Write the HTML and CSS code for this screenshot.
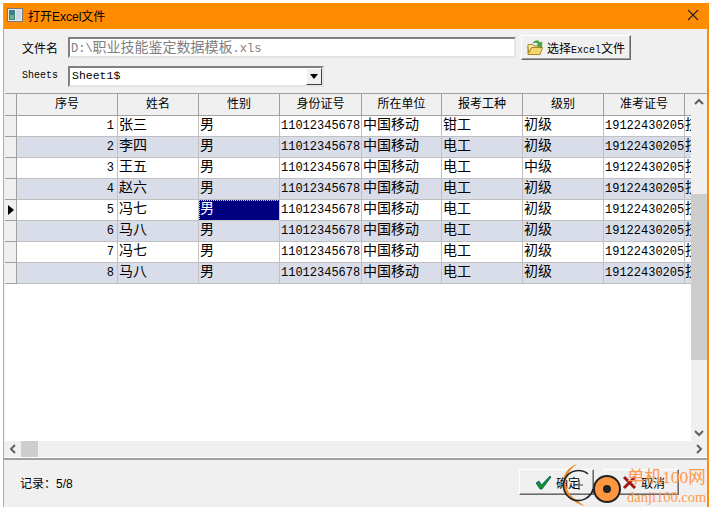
FILE: index.html
```html
<!DOCTYPE html>
<html lang="zh-CN">
<head>
    <meta charset="UTF-8">
    <title>打开Excel文件</title>
    <link rel="stylesheet" href="styles.css">
</head>
<body>
    <div class="window">
        <div class="titlebar">
            <svg class="app-icon" width="16" height="14" viewBox="0 0 16 14">
                <rect x="0.5" y="0.5" width="15" height="13" fill="#e8e8e8" stroke="#777"/>
                <rect x="2" y="2" width="6" height="10" fill="#3f7f86"/>
                <rect x="3" y="7" width="4" height="4" fill="#6fb08a"/>
                <rect x="9" y="2" width="5" height="10" fill="#cfd8e0"/>
            </svg>
            <span class="title">打开Excel文件</span>
            <svg class="close-icon" width="12" height="12" viewBox="0 0 12 12">
                <path d="M1 1L11 11M11 1L1 11" stroke="#222" stroke-width="1.1" fill="none"/>
            </svg>
        </div>

        <div class="form">
            <div class="form-row">
                <span class="label">文件名</span>
                <div class="field file-field">D:\<span class="cjk">职业技能鉴定数据模板</span>.xls</div>
                <div class="btn pick-btn">
                    <svg width="17" height="17" viewBox="0 0 17 17">
                        <path d="M1 7V15.5H13L15.5 8.5H4.5L2.5 13" fill="#f6d66f" stroke="#a98a2a"/>
                        <path d="M1 7V5.5H6L7 7H12V8.5H4.5L1.5 14Z" fill="#fbe9a4" stroke="#a98a2a"/>
                        <path d="M6 4C8 1 12 1 13 4L15 3L14.5 8.5L10 6.5L11.5 5.5C10.5 3.5 8 3 6 4Z" fill="#3fae3a" stroke="#2b7f2a" stroke-width="0.5"/>
                    </svg>
                    <span>选择<span class="mono-text">Excel</span>文件</span>
                </div>
            </div>
            <div class="form-row">
                <span class="label sheets">Sheets</span>
                <div class="field select-field">
                    <span>Sheet1$</span>
                    <span class="select-arrow"></span>
                </div>
            </div>
        </div>

        <div class="grid-box">
            <div class="grid-view">
                <div class="row head">
                    <div class="indicator"></div>
                    <div class="cell">序号</div><div class="cell">姓名</div><div class="cell">性别</div><div class="cell">身份证号</div>
                    <div class="cell">所在单位</div><div class="cell">报考工种</div><div class="cell">级别</div><div class="cell">准考证号</div><div class="cell"></div>
                </div>
                <div class="row">
                    <div class="indicator"></div>
                    <div class="cell num">1</div><div class="cell">张三</div><div class="cell">男</div><div class="cell code">11012345678</div>
                    <div class="cell">中国移动</div><div class="cell">钳工</div><div class="cell">初级</div><div class="cell code">19122430205</div><div class="cell clip">技</div>
                </div>
                <div class="row alt">
                    <div class="indicator"></div>
                    <div class="cell num">2</div><div class="cell">李四</div><div class="cell">男</div><div class="cell code">11012345678</div>
                    <div class="cell">中国移动</div><div class="cell">电工</div><div class="cell">初级</div><div class="cell code">19122430205</div><div class="cell clip">技</div>
                </div>
                <div class="row">
                    <div class="indicator"></div>
                    <div class="cell num">3</div><div class="cell">王五</div><div class="cell">男</div><div class="cell code">11012345678</div>
                    <div class="cell">中国移动</div><div class="cell">电工</div><div class="cell">中级</div><div class="cell code">19122430205</div><div class="cell clip">技</div>
                </div>
                <div class="row alt">
                    <div class="indicator"></div>
                    <div class="cell num">4</div><div class="cell">赵六</div><div class="cell">男</div><div class="cell code">11012345678</div>
                    <div class="cell">中国移动</div><div class="cell">电工</div><div class="cell">初级</div><div class="cell code">19122430205</div><div class="cell clip">技</div>
                </div>
                <div class="row">
                    <div class="indicator"><span class="pointer"></span></div>
                    <div class="cell num">5</div><div class="cell">冯七</div><div class="cell selected">男</div><div class="cell code">11012345678</div>
                    <div class="cell">中国移动</div><div class="cell">电工</div><div class="cell">初级</div><div class="cell code">19122430205</div><div class="cell clip">技</div>
                </div>
                <div class="row alt">
                    <div class="indicator"></div>
                    <div class="cell num">6</div><div class="cell">马八</div><div class="cell">男</div><div class="cell code">11012345678</div>
                    <div class="cell">中国移动</div><div class="cell">电工</div><div class="cell">初级</div><div class="cell code">19122430205</div><div class="cell clip">技</div>
                </div>
                <div class="row">
                    <div class="indicator"></div>
                    <div class="cell num">7</div><div class="cell">冯七</div><div class="cell">男</div><div class="cell code">11012345678</div>
                    <div class="cell">中国移动</div><div class="cell">电工</div><div class="cell">初级</div><div class="cell code">19122430205</div><div class="cell clip">技</div>
                </div>
                <div class="row alt">
                    <div class="indicator"></div>
                    <div class="cell num">8</div><div class="cell">马八</div><div class="cell">男</div><div class="cell code">11012345678</div>
                    <div class="cell">中国移动</div><div class="cell">电工</div><div class="cell">初级</div><div class="cell code">19122430205</div><div class="cell clip">技</div>
                </div>
            </div>
            <div class="vscroll">
                <svg width="16" height="16" viewBox="0 0 16 16"><path d="M4 10L8 6L12 10" stroke="#606060" stroke-width="2" fill="none"/></svg>
                <div class="vtrack"><div class="vthumb"></div></div>
                <svg width="16" height="16" viewBox="0 0 16 16"><path d="M4 6L8 10L12 6" stroke="#606060" stroke-width="2" fill="none"/></svg>
            </div>
            <div class="hscroll">
                <svg width="16" height="16" viewBox="0 0 16 16"><path d="M10 4L6 8L10 12" stroke="#606060" stroke-width="2" fill="none"/></svg>
                <div class="hthumb"></div>
                <svg class="hright" width="16" height="16" viewBox="0 0 16 16"><path d="M6 4L10 8L6 12" stroke="#606060" stroke-width="2" fill="none"/></svg>
            </div>
        </div>

        <div class="statusbar">
            <span class="record">记录：<span class="count">5/8</span></span>
            <div class="btn action-btn">
                <svg width="17" height="15" viewBox="0 0 17 15"><path d="M1 8L4 6L6.500 10L15 1L16 2L7 14H5Z" fill="#0a9a1a" stroke="#063a8a" stroke-width="0.7"/></svg>
                <span>确定</span>
            </div>
            <div class="btn action-btn">
                <svg width="17" height="15" viewBox="-2 0 17 15"><path d="M2 2L13 13M13 2L2 13" stroke="#a01818" stroke-width="3" fill="none"/></svg>
                <span>取消</span>
            </div>
        </div>
    </div>

    <svg class="wm-logo" width="64" height="44" viewBox="0 0 64 44">
        <path d="M17 1C8 4 2 12 3 22C4 32 13 40 25 43C17 38 7 32 6 22C5 13 10 6 17 1Z" fill="#f08a24"/>
        <path d="M28 11A15 15 0 1 0 33 26" fill="none" stroke="#222" stroke-width="1.600"/>
        <path d="M13 22H23M19 17V27" stroke="#444" stroke-width="1.200" fill="none"/>
        <circle cx="47" cy="26" r="13" fill="#ff9640" stroke="#222" stroke-width="2"/>
        <circle cx="47" cy="26" r="4" fill="#222"/>
    </svg>
    <div class="watermark">
        <div class="wm-cn">单机100网</div>
        <div class="wm-en">danji100.com</div>
    </div>
</body>
</html>
```

FILE: styles.css
```css
html, body {
    margin: 0;
    height: 507px;
    overflow: hidden;
    background: #fff;
}

body {
    position: relative;
    font-family: "Liberation Sans", "Noto Sans CJK SC", sans-serif;
    font-size: 13px;
    color: #000;
}

.window {
    width: 706px;
    height: 504px;
    margin: 3px 0 0 3px;
    box-sizing: border-box;
    border-left: 1px solid #e8a050;
    border-right: 2px solid #ff8c00;
    background: #f0f0f0;
    display: flex;
    flex-direction: column;
}

.titlebar {
    height: 26px;
    flex: none;
    box-sizing: border-box;
    background: #ff8c00;
    display: flex;
    align-items: center;
    padding: 0 8px 2px 3px;
}

.title {
    margin-left: 5px;
    font-size: 12px;
    flex: 1;
}

.form {
    height: 64px;
    flex: none;
    padding: 6px 0 0 18px;
    box-sizing: border-box;
}

.form-row {
    display: flex;
    align-items: center;
    height: 25px;
    margin-bottom: 4px;
}

.label {
    width: 46px;
    flex: none;
    font-size: 12px;
}

.sheets {
    font-family: "Liberation Mono", monospace;
    font-size: 10px;
    margin-top: -2px;
}

.field {
    height: 21px;
    box-sizing: border-box;
    background: #fff;
    border: 2px solid;
    border-color: #808080 #e4e4e4 #e4e4e4 #808080;
    font-family: "Liberation Mono", "Noto Sans CJK SC", monospace;
    font-size: 11.500px;
    line-height: 18px;
    padding-left: 1px;
    white-space: nowrap;
}

.file-field {
    width: 448px;
    color: #808080;
    font-size: 12px;
}

.cjk {
    font-size: 14px;
}

.select-field {
    width: 256px;
    display: flex;
    justify-content: space-between;
    color: #000;
    padding-left: 2px;
    line-height: 16px;
}

.select-arrow {
    width: 16px;
    height: 17px;
    box-sizing: border-box;
    background: #f0f0f0;
    border: 1px solid;
    border-color: #fff #404040 #404040 #fff;
    position: relative;
}

.select-arrow::after {
    content: "";
    position: absolute;
    left: 3px;
    top: 5px;
    border: 4px solid transparent;
    border-top: 5px solid #000;
    border-bottom: 0;
}

.btn {
    box-sizing: border-box;
    display: flex;
    align-items: center;
    background: #f0f0f0;
    border: 1px solid;
    border-color: #fff #696969 #696969 #fff;
    box-shadow: inset -1px -1px 0 #a0a0a0;
}

.pick-btn {
    width: 110px;
    height: 25px;
    margin-left: 5px;
    padding-left: 5px;
    gap: 3px;
    font-size: 12px;
}

.mono-text {
    font-family: "Liberation Mono", monospace;
    font-size: 10px;
}

.grid-box {
    flex: none;
    height: 364px;
    margin-left: 1px;
    background: #fff;
    border-top: 1px solid #a0a0a0;
    display: grid;
    grid-template-columns: 686px 16px;
    grid-template-rows: 347px 16px;
}

.grid-view {
    overflow: hidden;
}

.row {
    display: grid;
    grid-template-columns: 12px 101px 81px 81px 82px 80px 81px 81px 81px 7px;
    height: 21px;
}

.row.head {
    height: 22px;
}

.indicator,
.head .cell {
    background: #f0f0f0;
}

.indicator {
    box-sizing: border-box;
    border-right: 1px solid #a0a0a0;
    border-bottom: 1px solid #a0a0a0;
    display: flex;
    align-items: center;
    justify-content: center;
}

.pointer {
    border: 5px solid transparent;
    border-left: 6px solid #000;
    border-right: 0;
}

.cell {
    box-sizing: border-box;
    border-right: 1px solid #c0c0c0;
    border-bottom: 1px solid #c0c0c0;
    padding: 0 1px;
    font-size: 14px;
    line-height: 18px;
    white-space: nowrap;
    overflow: hidden;
    font-family: "Liberation Mono", "Noto Sans CJK SC", monospace;
}

.head .cell {
    border-color: #a0a0a0;
    text-align: center;
    font-size: 12px;
    line-height: 23px;
}

.alt .cell {
    background: #d9dde9;
}

.num,
.code {
    font-size: 12px;
    line-height: 20px;
}

.num {
    text-align: right;
    padding-right: 3px;
}

.clip {
    padding: 0;
    border-right: 0;
}

.cell.selected {
    background: #000080;
    color: #fff;
    outline: 1px dotted #e8e060;
    outline-offset: -1px;
}

.vscroll {
    background: #f0f0f0;
    display: flex;
    flex-direction: column;
}

.vtrack {
    flex: 1;
    position: relative;
}

.vthumb {
    position: absolute;
    left: 0;
    right: 0;
    top: 84px;
    height: 166px;
    background: #cdcdcd;
}

.hscroll {
    grid-column: 1 / 3;
    background: #f0f0f0;
    display: flex;
    align-items: center;
}

.hthumb {
    width: 17px;
    height: 16px;
    background: #cdcdcd;
}

.hright {
    margin-left: auto;
}

.statusbar {
    flex: 1;
    border-top: 2px solid #a0a0a0;
    display: flex;
    align-items: center;
    padding: 0 28px 3px 16px;
    gap: 10px;
}

.record {
    flex: 1;
    font-size: 12px;
}

.count {
    font-family: "Liberation Sans", sans-serif;
}

.action-btn {
    width: 75px;
    height: 26px;
    font-size: 12px;
    padding-left: 15px;
    gap: 4px;
}

.wm-logo {
    position: absolute;
    left: 560px;
    top: 463px;
}

.watermark {
    position: absolute;
    left: 627px;
    top: 469px;
    color: #ff9a50;
    font-family: "Liberation Serif", "Noto Sans CJK SC", serif;
    line-height: 1;
    white-space: nowrap;
}

.wm-cn {
    font-size: 17.500px;
}

.wm-en {
    margin-top: 3px;
    font-size: 14.500px;
}
```
